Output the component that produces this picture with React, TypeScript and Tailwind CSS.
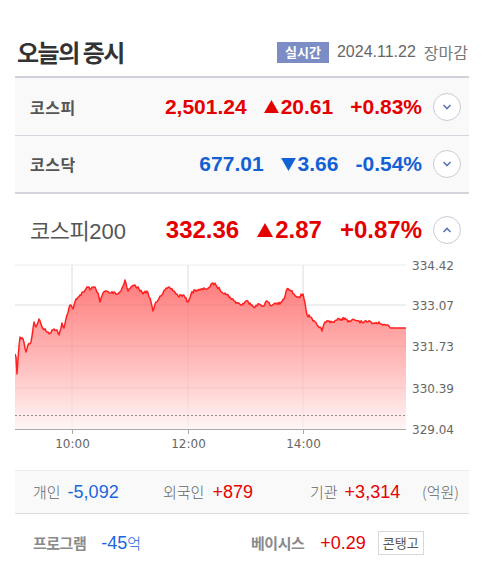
import React from "react";

const KR = "font-['Noto_Sans_CJK_KR','Noto_Sans',sans-serif]";
const NUM = "font-['Liberation_Sans',Arial,sans-serif]";
const AXIS = "font-['DejaVu_Sans',Verdana,sans-serif]";

// 화면 좌표로 잡은 지수 흐름 (x, y)
const KP: [number, number][] = [
  [15, 357], [16, 360], [17, 377], [18, 362], [20, 340], [23, 342], [26, 355], [28, 348], [31, 345],
  [34, 325], [36, 330], [39, 322], [42, 330], [46, 334], [50, 336], [54, 332], [57, 333], [59, 338],
  [62, 326], [64, 331], [67, 318], [70, 308], [73, 312], [76, 302], [80, 298], [84, 295], [87, 290],
  [91, 292], [95, 290], [98, 296], [100, 305], [103, 296], [106, 294], [110, 296], [114, 295],
  [117, 297], [121, 294], [125, 283], [128, 294], [131, 290], [135, 288], [139, 292], [143, 297],
  [147, 294], [151, 305], [153, 314], [156, 305], [160, 299], [165, 293], [170, 291], [174, 294],
  [178, 299], [183, 298], [188, 305], [191, 297], [195, 293], [200, 293], [205, 292], [210, 290],
  [213, 286], [216, 288], [220, 293], [225, 296], [230, 300], [234, 304], [238, 306], [242, 308],
  [246, 304], [250, 306], [255, 310], [259, 307], [263, 309], [267, 304], [271, 309], [275, 306],
  [280, 307], [284, 302], [287, 292], [290, 293], [294, 297], [299, 300], [303, 297], [305, 306],
  [307, 318], [310, 320], [313, 324], [317, 328], [320, 330], [322, 334], [325, 325], [329, 324],
  [333, 325], [337, 323], [341, 322], [345, 321], [348, 325], [351, 324], [355, 323], [359, 324],
  [363, 326], [367, 325], [371, 325], [375, 326], [379, 325], [383, 328], [388, 328], [391, 331],
  [406, 331],
];

function buildLine() {
  let seed = 7;
  const rand = () => {
    seed = (seed * 16807) % 2147483647;
    return seed / 2147483647;
  };
  const pts: [number, number][] = [];
  for (let i = 0; i < KP.length - 1; i++) {
    const [x0, y0] = KP[i];
    const [x1, y1] = KP[i + 1];
    const flat = x0 >= 391;
    for (let x = x0; x < x1; x += 1) {
      const t = (x - x0) / (x1 - x0);
      const j = flat || x === x0 ? 0 : (rand() - 0.5) * 3;
      pts.push([x, y0 + (y1 - y0) * t + j]);
    }
  }
  pts.push(KP[KP.length - 1]);
  return pts.map(([x, y]) => [x - 15, y - 259] as [number, number]);
}

const LINE = buildLine();
const LINE_D = LINE.map(([x, y], i) => `${i ? "L" : "M"}${x.toFixed(1)} ${y.toFixed(1)}`).join(" ");
const AREA_D = `${LINE_D} L391 173 L0 173 Z`;

function Chevron({ up }: { up?: boolean }) {
  return (
    <div className="w-[28px] h-[28px] rounded-full border border-[#c9ccd8] bg-white flex items-center justify-center">
      <svg width="10" height="6" viewBox="0 0 10 6">
        <path
          d={up ? "M1.5 5 L5 1.5 L8.5 5" : "M1.5 1 L5 4.5 L8.5 1"}
          fill="none"
          stroke="#5f73b8"
          strokeWidth="1.6"
        />
      </svg>
    </div>
  );
}

function Tri({ up, size }: { up: boolean; size: number }) {
  const h = Math.round(size * 0.85);
  return (
    <svg width={size} height={h} viewBox="0 0 16 14" className="mr-[2px]">
      <path d={up ? "M8 0 L16 14 L0 14 Z" : "M0 0 L16 0 L8 14 Z"} fill={up ? "#e50000" : "#1261d4"} />
    </svg>
  );
}

function IndexRow({
  name,
  price,
  diff,
  rate,
  up,
  border,
}: {
  name: string;
  price: string;
  diff: string;
  rate: string;
  up: boolean;
  border: string;
}) {
  const color = up ? "text-[#e50000]" : "text-[#1261d4]";
  return (
    <div className={`h-[58px] bg-[#f9f9f9] flex items-center pl-[15px] pr-[8px] ${border}`}>
      <span className={`${KR} text-[16px] font-bold text-[#555] tracking-[0.5px]`}>{name}</span>
      <div className={`${NUM} ml-auto flex items-center gap-[17px] text-[21px] font-bold ${color}`}>
        <span>{price}</span>
        <span className="flex items-center">
          <Tri up={up} size={15} />
          {diff}
        </span>
        <span>{rate}</span>
      </div>
      <div className="ml-[11px]">
        <Chevron />
      </div>
    </div>
  );
}

function Chart() {
  const grid = [9, 49, 90, 132];
  const labels = ["334.42", "333.07", "331.73", "330.39"];
  const times: [number, string][] = [
    [57, "10:00"],
    [173, "12:00"],
    [288, "14:00"],
  ];
  return (
    <svg width="454" height="214" viewBox="0 0 454 214" className="block">
      <defs>
        <linearGradient id="fillRed" x1="0" y1="25" x2="0" y2="173" gradientUnits="userSpaceOnUse">
          <stop offset="0" stopColor="#ff7c7c" />
          <stop offset="0.55" stopColor="#ffbcbc" />
          <stop offset="1" stopColor="#fff6f6" />
        </linearGradient>
      </defs>
      {grid.map((y) => (
        <line key={y} x1="0" x2="391" y1={y} y2={y} stroke="#ececec" strokeWidth="1" />
      ))}
      {times.map(([x]) => (
        <line key={x} x1={x} x2={x} y1="9" y2="173" stroke="#e6e6e6" strokeWidth="1" />
      ))}
      <path d={AREA_D} fill="url(#fillRed)" />
      {grid.slice(1).map((y) => (
        <line key={`o${y}`} x1="0" x2="391" y1={y} y2={y} stroke="rgba(0,0,0,0.05)" strokeWidth="1" />
      ))}
      {times.map(([x]) => (
        <line key={`o${x}`} x1={x} x2={x} y1="9" y2="173" stroke="rgba(0,0,0,0.04)" strokeWidth="1" />
      ))}
      <path d={LINE_D} fill="none" stroke="#ff2020" strokeWidth="1.5" strokeLinejoin="round" />
      <line x1="0" x2="391" y1="159.5" y2="159.5" stroke="#8f8f8f" strokeWidth="1" strokeDasharray="2 2" />
      <line x1="0" x2="391" y1="173.5" y2="173.5" stroke="#aaaaaa" strokeWidth="1" />
      {times.map(([x]) => (
        <line key={`t${x}`} x1={x + 0.5} x2={x + 0.5} y1="173" y2="178" stroke="#aaaaaa" strokeWidth="1" />
      ))}
      {labels.map((l, i) => (
        <text key={l} x="397" y={grid[i] + 4.5} fontSize="12" fill="#666" className={AXIS}>
          {l}
        </text>
      ))}
      <text x="397" y="177.5" fontSize="12" fill="#666" className={AXIS}>
        329.04
      </text>
      {times.map(([x, t]) => (
        <text key={t} x={x + 0.5} y="191.5" fontSize="12" fill="#666" textAnchor="middle" className={AXIS}>
          {t}
        </text>
      ))}
    </svg>
  );
}

export default function App() {
  return (
    <div className="w-[484px] h-[576px] bg-white px-[15px] overflow-hidden">
      {/* 헤더 */}
      <div className="h-[78px] pt-[28px] flex items-center border-b-2 border-[#d0d0da]">
        <h1 className={`${KR} pl-[2px] text-[24px] font-bold text-[#333] tracking-[-1.5px]`}>오늘의 증시</h1>
        <div className="ml-auto flex items-center">
          <span
            className={`${KR} w-[52px] h-[21px] bg-[#7b8dc4] text-white text-[13px] font-bold flex items-center justify-center`}
          >
            실시간
          </span>
          <span className={`${NUM} ml-[8px] text-[16px] text-[#666]`}>2024.11.22</span>
          <span className={`${KR} ml-[8px] text-[16px] text-[#777] mr-[1px]`}>장마감</span>
        </div>
      </div>

      <IndexRow name="코스피" price="2,501.24" diff="20.61" rate="+0.83%" up border="border-b border-[#d4d4dc]" />
      <IndexRow name="코스닥" price="677.01" diff="3.66" rate="-0.54%" up={false} border="border-b-2 border-[#d4d4dc]" />

      {/* 코스피200 */}
      <div className="h-[62px] pt-[10px] flex items-center pl-[15px] pr-[8px]">
        <span className="text-[22px] text-[#555] flex items-baseline">
          <span className={`${KR} tracking-[-0.5px]`}>코스피</span>
          <span className={NUM}>200</span>
        </span>
        <div className={`${NUM} ml-auto flex items-center gap-[18px] text-[24px] font-bold text-[#e50000]`}>
          <span>332.36</span>
          <span className="flex items-center">
            <Tri up size={16} />
            2.87
          </span>
          <span>+0.87%</span>
        </div>
        <div className="ml-[11px]">
          <Chevron up />
        </div>
      </div>

      <Chart />

      {/* 투자자별 */}
      <div className="h-[44px] bg-[#f9f9f9] border-t border-[#ececec] border-b border-b-[#dcdcdc] flex items-center pl-[18px] pr-[10px] text-[#666]">
        <div className="w-[130px] flex items-center">
          <span className={`${KR} text-[15px] font-light`}>개인</span>
          <span className={`${NUM} ml-[7px] text-[18px] text-[#1a66e0]`}>-5,092</span>
        </div>
        <div className="w-[147px] flex items-center">
          <span className={`${KR} text-[15px] font-light`}>외국인</span>
          <span className={`${NUM} ml-[8px] text-[18px] text-[#e80000]`}>+879</span>
        </div>
        <div className="flex items-center">
          <span className={`${KR} text-[15px] font-light`}>기관</span>
          <span className={`${NUM} ml-[7px] text-[18px] text-[#e80000]`}>+3,314</span>
        </div>
        <span className={`${KR} ml-auto text-[15px] font-light`}>(억원)</span>
      </div>

      {/* 프로그램 / 베이시스 */}
      <div className="h-[58px] flex items-center pl-[18px]">
        <span className={`${KR} text-[15px] font-bold text-[#8a8a8a] tracking-[-0.5px]`}>프로그램</span>
        <span className="ml-[15px] text-[#1a66e0] flex items-baseline">
          <span className={`${NUM} text-[18px]`}>-45</span>
          <span className={`${KR} text-[15px] font-light`}>억</span>
        </span>
        <span className={`${KR} ml-[110px] text-[15px] font-bold text-[#8a8a8a] tracking-[-0.5px]`}>베이시스</span>
        <span className={`${NUM} ml-[16px] text-[18px] text-[#e80000]`}>+0.29</span>
        <span
          className={`${KR} ml-[12px] h-[24px] px-[4px] border border-[#d8d8d8] bg-white text-[13px] text-[#555] flex items-center`}
        >
          콘탱고
        </span>
      </div>
    </div>
  );
}
